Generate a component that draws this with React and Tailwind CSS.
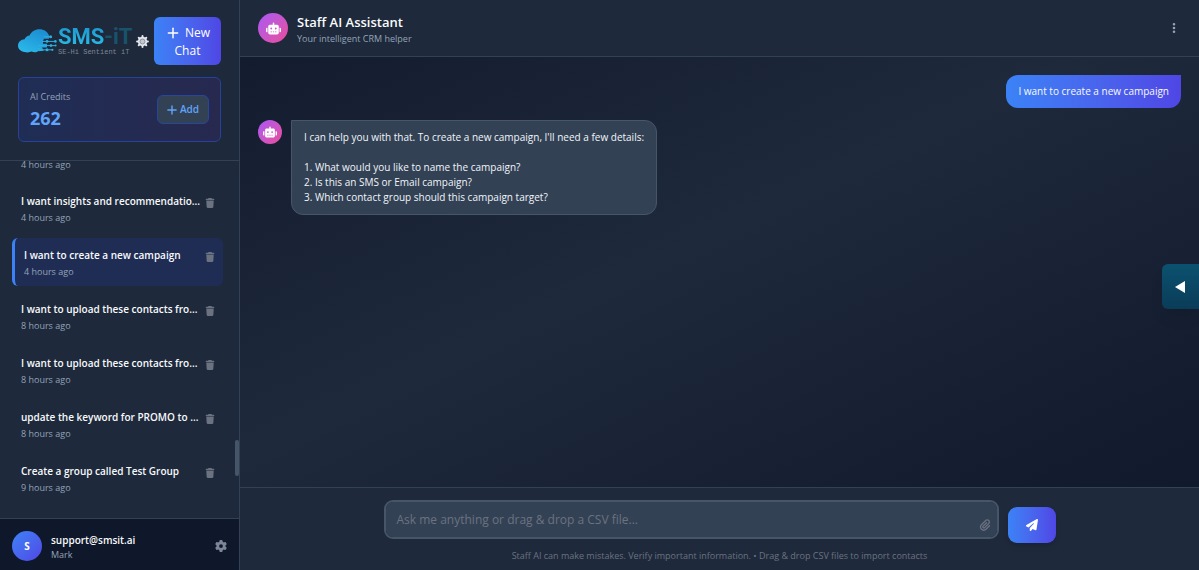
import React from "react";
import { Plus } from "lucide-react";
import { FaTrash, FaGear, FaEllipsisVertical, FaRobot, FaPaperPlane, FaPaperclip } from "react-icons/fa6";

const chats = [
  { title: "I want insights and recommendatio...", time: "4 hours ago" },
  { title: "I want to create a new campaign", time: "4 hours ago", active: true },
  { title: "I want to upload these contacts fro...", time: "8 hours ago" },
  { title: "I want to upload these contacts fro...", time: "8 hours ago" },
  { title: "update the keyword for PROMO to ...", time: "8 hours ago" },
  { title: "Create a group called Test Group", time: "9 hours ago" },
];

function CloudLogo() {
  return (
    <svg viewBox="0 0 40 24" className="h-6 w-10 shrink-0" aria-hidden="true">
      <defs>
        <linearGradient id="cloud" x1="0" y1="1" x2="0.6" y2="0">
          <stop offset="0" stopColor="#2dbcec" />
          <stop offset="1" stopColor="#1c90d2" />
        </linearGradient>
      </defs>
      <path
        d="M6.5 23 C2.6 22.6 0 20 0 16.6 C0 13 2.8 10.4 6.6 10.2 C7.4 8 9.2 6.6 11.6 6.4 C13.2 2.6 17 0.2 21.4 0.2 C26 0.2 29.8 2.8 31 6.6 L31 8 L31 17 C29 21 25 22.8 20.6 22 C18.6 23.4 16 23.8 13.6 22.6 C11.4 23.6 8.8 23.6 6.5 23 Z"
        fill="url(#cloud)"
      />
      <path d="M26 9.8 H34 V24 H21 L22.5 22 H26 L24 18.4 H29 V14.8 H25 V12 Z" fill="#1e293b" />
      <g stroke="#2bb0e4" strokeWidth="1" fill="none">
        <path d="M26 7.8 H32 M24 12.4 H37 M20 16.6 H37 M20 19 L23 20.8 H34" />
      </g>
      <g fill="#2bb0e4">
        <circle cx="32.6" cy="7.8" r="1.5" />
        <circle cx="29" cy="12.4" r="1.4" />
        <circle cx="37.4" cy="12.4" r="1.3" />
        <circle cx="33" cy="16.6" r="1.4" />
        <circle cx="37.6" cy="16.6" r="1" />
        <circle cx="29" cy="20.8" r="1.5" />
        <circle cx="34.4" cy="20.8" r="1.1" />
      </g>
    </svg>
  );
}

function PaleGear() {
  return (
    <svg viewBox="0 0 24 24" className="size-[13px] shrink-0" aria-hidden="true">
      <g stroke="#e5e7eb" strokeWidth="3.6" strokeLinecap="round">
        <path d="M12 2 V22 M2 12 H22 M5 5 L19 19 M19 5 L5 19" />
      </g>
      <circle cx="12" cy="12" r="8.6" fill="#e5e7eb" />
      <circle cx="12" cy="12" r="4.6" fill="#c3c9d2" stroke="#7b8797" strokeWidth="1.6" />
    </svg>
  );
}

function ChatItem({ chat }) {
  return (
    <li
      className={
        chat.active
          ? "flex h-12 items-center justify-between rounded-md border-l-3 border-[#3b82f6] bg-[#1f2d55] pr-2 pl-[9px]"
          : "flex h-12 items-center justify-between rounded-md pr-2 pl-[9px]"
      }
    >
      <a href="#chat" className="min-w-0 flex-1 pt-[3px] whitespace-nowrap">
        <span className="block text-[10px] leading-[16px] font-semibold text-[#f8fafc]">{chat.title}</span>
        <span className="mt-px block text-[9px] leading-[16px] text-[#94a3b8]">{chat.time}</span>
      </a>
      <button type="button" aria-label="Delete chat" className="mt-[14px] self-start text-[#6b7280]">
        <FaTrash className="size-[10px]" />
      </button>
    </li>
  );
}

function Sidebar() {
  return (
    <aside className="flex w-60 shrink-0 flex-col border-r border-[#334155] bg-[#1e293b]">
      <div className="border-b border-[#334155] px-[18px] pt-[17px] pb-[18px]">
        <div className="flex items-center justify-between">
          <div className="flex items-center">
            <CloudLogo />
            <div className="w-[78px] whitespace-nowrap">
              <div className="font-['Roboto',sans-serif] text-[22px] leading-[22px] font-bold">
                <span className="bg-linear-to-b from-[#1c93cf] to-[#2cc0e8] bg-clip-text text-transparent">SMS</span>
                <span className="text-[#17546c]">-iT</span>
              </div>
              <div className="font-['Liberation_Mono',monospace] text-[7px] leading-[8px] text-[#7b8797]">
                SE-Hi Sentient iT
              </div>
            </div>
            <PaleGear />
          </div>
          <button
            type="button"
            className="w-[67px] rounded-md bg-linear-to-r from-[#3b82f6] to-[#4f46e5] pt-[7px] pb-[5px] text-[12px] leading-[18px] font-medium text-white"
          >
            <Plus className="mr-1 inline-block size-4 align-text-bottom" strokeWidth={2.2} />
            New Chat
          </button>
        </div>
        <div className="mt-3 flex items-center justify-between rounded-md border border-[#27429a] bg-linear-to-r from-[#1f2d55] to-[#27294f] px-[11px] py-[10px]">
          <div>
            <div className="text-[9px] leading-[18px] text-[#94a3b8]">AI Credits</div>
            <div className="text-[18px] leading-[25px] font-bold text-[#60a5fa]">262</div>
          </div>
          <button
            type="button"
            className="flex h-[29px] items-center gap-px rounded-md border border-[#27489a] bg-[#334155] pr-[9px] pl-[7px] text-[10px] font-semibold text-[#60a5fa]"
          >
            <Plus className="size-[14px]" strokeWidth={2.4} />
            Add
          </button>
        </div>
      </div>
      <nav aria-label="Chats" className="relative min-h-0 flex-1">
        <ul className="flex flex-col gap-[6px] pr-4 pl-3">
          <li className="h-[17px] pl-[9px] text-[9px] leading-[7px] text-[#94a3b8]">4 hours ago</li>
          {chats.map((chat, i) => (
            <ChatItem key={i} chat={chat} />
          ))}
        </ul>
        <div className="absolute top-[279px] right-0 h-9 w-1 rounded-full bg-[#475569]" />
      </nav>
      <div className="flex items-center border-t border-[#334155] bg-[#0f172a] px-3 pt-3 pb-[9px]">
        <div className="mr-[9px] flex size-[30px] items-center justify-center rounded-full bg-linear-to-br from-[#3b82f6] to-[#4f46e5] text-[10px] font-bold text-white">
          S
        </div>
        <div className="flex-1 pt-[2px]">
          <div className="text-[10px] leading-[15px] font-semibold text-[#f8fafc]">support@smsit.ai</div>
          <div className="text-[9px] leading-[13px] text-[#94a3b8]">Mark</div>
        </div>
        <button type="button" aria-label="Settings" className="text-[#7b8797]">
          <FaGear className="size-3" />
        </button>
      </div>
    </aside>
  );
}

export default function App() {
  return (
    <div className="flex h-screen min-h-0 bg-linear-to-br from-[#0f172a] via-[#1e293b] to-[#0f172a] font-['Open_Sans','Noto_Sans',sans-serif] text-[#f8fafc]">
      <Sidebar />
      <main className="flex min-w-0 flex-1 flex-col">
        <header className="flex items-center border-b border-[#334155] bg-[#1e293b] px-[18px] py-[9px]">
          <div className="flex size-[30px] items-center justify-center rounded-full bg-linear-to-br from-[#a855f7] to-[#ec4899]">
            <FaRobot className="size-[15px] text-white" />
          </div>
          <div className="ml-[9px] flex-1 pt-1">
            <h1 className="text-[13px] leading-[18px] font-semibold">Staff AI Assistant</h1>
            <p className="text-[9px] leading-[16px] text-[#94a3b8]">Your intelligent CRM helper</p>
          </div>
          <button type="button" aria-label="More options" className="px-px text-[#94a3b8]">
            <FaEllipsisVertical className="size-3" />
          </button>
        </header>

        <section aria-label="Conversation" className="flex min-h-0 flex-1 flex-col gap-3 px-[18px] pt-[18px]">
          <div className="self-end rounded-xl rounded-tr-none bg-linear-to-r from-[#3b82f6] to-[#4f46e5] px-3 py-[9px] text-[10px] leading-[15px]">
            I want to create a new campaign
          </div>
          <div className="flex items-start">
            <div className="mr-[9px] flex size-6 items-center justify-center rounded-full bg-linear-to-br from-[#a855f7] to-[#ec4899]">
              <FaRobot className="size-[14px] text-white" />
            </div>
            <div className="rounded-xl rounded-tl-none border border-[#475569] bg-[#334155] px-3 py-[9px] text-[10px] leading-[15px] whitespace-pre-line text-[#f1f5f9]">
              {"I can help you with that. To create a new campaign, I'll need a few details:\n\n1. What would you like to name the campaign?\n2. Is this an SMS or Email campaign?\n3. Which contact group should this campaign target?"}
            </div>
          </div>
        </section>

        <footer className="border-t border-[#334155] bg-[#1e293b] px-[18px] pt-3 pb-[7px]">
          <form className="mx-auto flex max-w-[672px] items-end gap-[9px]" onSubmit={(e) => e.preventDefault()}>
            <div className="relative min-w-0 flex-1 pb-1">
              <textarea
                rows={1}
                aria-label="Message"
                placeholder="Ask me anything or drag & drop a CSV file..."
                className="block h-[39px] w-full resize-none rounded-[9px] border-2 border-[#475569] bg-[#334155] py-[9px] pr-9 pl-[11px] text-[12px] leading-[18px] text-[#f8fafc] outline-none placeholder:text-[#6b7280]"
              />
              <button type="button" aria-label="Attach file" className="absolute right-2 bottom-3 text-[#6b7280]">
                <FaPaperclip className="size-3" />
              </button>
            </div>
            <button
              type="submit"
              aria-label="Send"
              className="flex h-9 w-12 items-center justify-center rounded-[9px] bg-linear-to-r from-[#3b82f6] to-[#4f46e5] text-white shadow-md"
            >
              <FaPaperPlane className="size-3" />
            </button>
          </form>
          <p className="mt-[6px] text-center text-[9px] leading-[14px] text-[#6b7280]">
            Staff AI can make mistakes. Verify important information. • Drag &amp; drop CSV files to import contacts
          </p>
        </footer>
      </main>
      <button
        type="button"
        aria-label="Open panel"
        className="fixed top-1/2 right-0 flex h-[45px] w-[37px] -translate-y-[21px] items-center justify-center rounded-l-md bg-linear-to-b from-[#0b5270] to-[#0a3c58] pr-[2px] text-white shadow-lg"
      >
        <svg viewBox="0 0 10 12" className="h-3 w-[10px]" aria-hidden="true">
          <path d="M10 0 V12 L0 6 Z" fill="currentColor" />
        </svg>
      </button>
    </div>
  );
}
